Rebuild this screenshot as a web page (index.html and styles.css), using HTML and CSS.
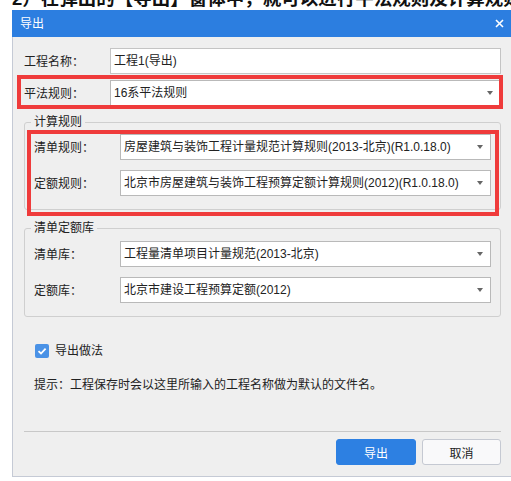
FILE: index.html
```html
<!DOCTYPE html>
<html lang="zh-CN">
<head>
<meta charset="utf-8">
<title>导出</title>
<link rel="stylesheet" href="styles.css">
</head>
<body>
<div class="heading"><span class="heading-text">2）在弹出的【导出】窗体中，就可以进行平法规则及计算规则的设置</span></div>
<div class="dialog">
  <div class="titlebar">
    <span class="title">导出</span>
    <svg class="close" width="9" height="9" viewBox="0 0 9 9"><path d="M1 1L8 8M8 1L1 8" stroke="#fff" stroke-width="1.6" fill="none"/></svg>
  </div>
  <div class="body">
    <div class="row">
      <label class="label">工程名称<span class="colon">：</span></label>
      <div class="field">工程1(导出)</div>
    </div>
    <div class="row row-rule">
      <label class="label">平法规则<span class="colon">：</span></label>
      <div class="field select">16系平法规则<i class="arrow"></i></div>
    </div>
    <fieldset class="group group-calc">
      <legend>计算规则</legend>
      <div class="row">
        <label class="label">清单规则<span class="colon">：</span></label>
        <div class="field select">房屋建筑与装饰工程计量规范计算规则(2013-北京)(R1.0.18.0)<i class="arrow"></i></div>
      </div>
      <div class="row">
        <label class="label">定额规则<span class="colon">：</span></label>
        <div class="field select">北京市房屋建筑与装饰工程预算定额计算规则(2012)(R1.0.18.0)<i class="arrow"></i></div>
      </div>
    </fieldset>
    <fieldset class="group group-lib">
      <legend>清单定额库</legend>
      <div class="row">
        <label class="label">清单库<span class="colon">：</span></label>
        <div class="field select">工程量清单项目计量规范(2013-北京)<i class="arrow"></i></div>
      </div>
      <div class="row">
        <label class="label">定额库<span class="colon">：</span></label>
        <div class="field select">北京市建设工程预算定额(2012)<i class="arrow"></i></div>
      </div>
    </fieldset>
    <div class="check">
      <span class="box"><svg width="14" height="14" viewBox="0 0 14 14"><path d="M3.5 7.2L6 9.5L10.6 4.6" stroke="#fff" stroke-width="1.8" fill="none"/></svg></span>
      <span>导出做法</span>
    </div>
    <p class="hint">提示<span class="colon">：</span>工程保存时会以这里所输入的工程名称做为默认的文件名。</p>
    <div class="footer">
      <button class="btn btn-primary">导出</button>
      <button class="btn btn-cancel">取消</button>
    </div>
    <div class="mark mark-rule"></div>
    <div class="mark mark-calc"></div>
  </div>
</div>
</body>
</html>
```
FILE: styles.css
```css
html, body {
  margin: 0;
  padding: 0;
  background: #fff;
  overflow: hidden;
}
body {
  font-family: "Liberation Sans", "Noto Sans CJK SC", sans-serif;
  font-size: 12px;
  color: #222;
}
.heading {
  height: 10px;
  overflow: hidden;
  padding-left: 12px;
  white-space: nowrap;
}
.heading-text {
  display: block;
  margin-top: -11px;
  font-size: 18.5px;
  line-height: 20px;
  font-weight: bold;
  color: #111;
}
.dialog {
  margin-left: 12px;
  width: 499px;
}
.titlebar {
  height: 27px;
  background: #2c7ee0;
  color: #fff;
  display: flex;
  align-items: center;
  justify-content: space-between;
  padding: 0 7px 0 8px;
}
.title {
  font-size: 12px;
  line-height: 16px;
}
.close {
  display: block;
}
.body {
  position: relative;
  background: #efefef;
  border-left: 1px solid #c5cad5;
  border-bottom: 1px solid #c5cad5;
  padding: 11px 10px 11px 11px;
}
.row {
  display: flex;
  align-items: center;
  height: 26px;
}
.row + .row {
  margin-top: 10px;
}
.row-rule.row {
  margin-top: 6px;
}
.label {
  width: 86px;
  flex: none;
  line-height: 16px;
}
.colon {
  font-family: "Noto Sans CJK TC", "Noto Sans CJK SC", sans-serif;
}
.field {
  flex: 1;
  min-width: 0;
  height: 26px;
  box-sizing: border-box;
  border: 1px solid #c4c4c4;
  background: #fff;
  padding: 0 3px;
  display: flex;
  align-items: center;
  white-space: nowrap;
  line-height: 16px;
}
.select {
  border-color: #b9b9b9;
}
.arrow {
  margin-left: auto;
  margin-right: 4px;
  width: 0;
  height: 0;
  border-left: 3px solid transparent;
  border-right: 3px solid transparent;
  border-top: 4px solid #666;
}
.group {
  margin: 8px 0 0;
  padding: 4px 9px 13px;
  border: 1px solid #cfcfcf;
  border-radius: 3px;
  min-width: 0;
}
.group-lib {
  margin-top: 10px;
  padding-top: 5px;
}
.group legend {
  padding: 0 3px;
  margin-left: -3px;
  line-height: 16px;
  font-size: 12px;
  color: #222;
}
.check {
  margin: 27px 0 0 11px;
  height: 14px;
  display: flex;
  align-items: center;
  gap: 6px;
  line-height: 16px;
}
.box {
  width: 14px;
  height: 14px;
  border-radius: 2px;
  background: #4a92e6;
  display: block;
}
.box svg {
  display: block;
}
.hint {
  margin: 18px 0 0 10px;
  line-height: 16px;
}
.footer {
  margin-top: 38px;
  border-top: 1px solid #c8c8c8;
  padding-top: 7px;
  display: flex;
  justify-content: flex-end;
  gap: 6px;
}
.btn {
  width: 80px;
  height: 26px;
  border-radius: 3px;
  font-family: inherit;
  font-size: 12px;
  padding: 0;
  cursor: pointer;
}
.btn-primary {
  background: #2d80e2;
  border: 1px solid #2d80e2;
  color: #fff;
}
.btn-cancel {
  width: 79px;
  background: #f9f9fa;
  border: 1px solid #c5c9d2;
  color: #222;
}
.mark {
  position: absolute;
  border: 4px solid #ef3b3b;
  box-sizing: border-box;
  pointer-events: none;
}
.mark-rule {
  left: 4px;
  top: 38px;
  width: 486px;
  height: 34px;
}
.mark-calc {
  left: 14px;
  top: 93px;
  width: 472px;
  height: 86px;
}
```
